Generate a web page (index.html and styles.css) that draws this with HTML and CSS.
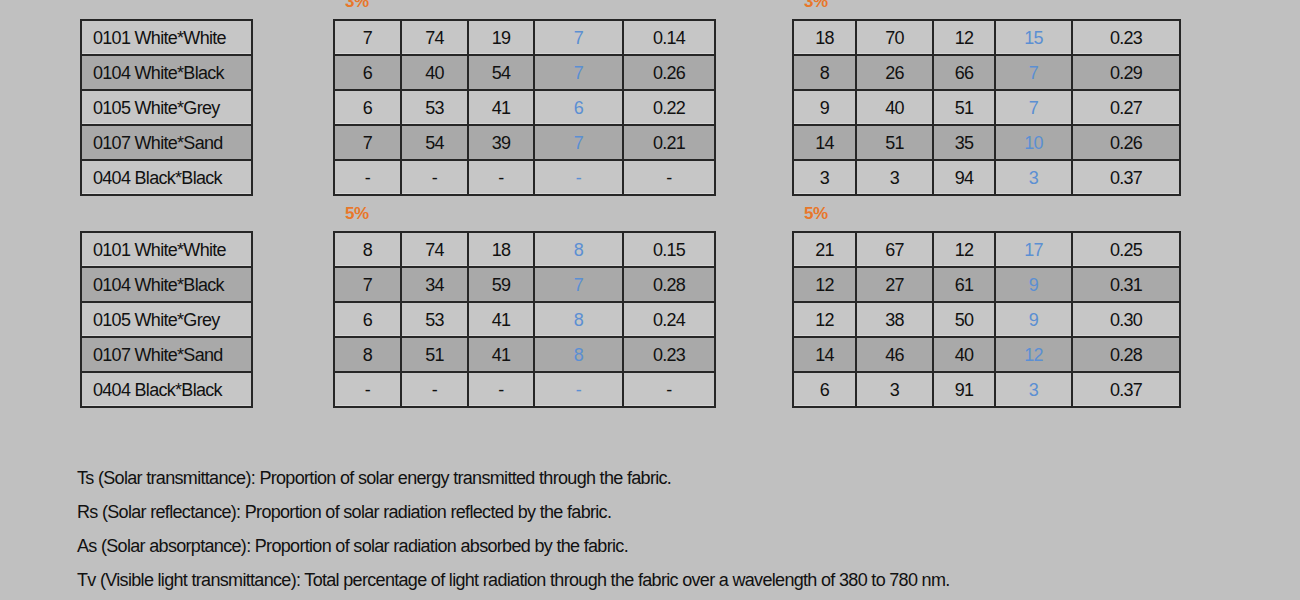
FILE: index.html
```html
<!DOCTYPE html>
<html>
<head>
<meta charset="utf-8">
<link rel="stylesheet" href="styles.css">
</head>
<body>
<div class="page">
  <div class="block">
    <div class="group names-group">
      <div class="label"></div>
      <table class="tbl names">
        <tr><td>0101 White*White</td></tr>
        <tr class="dark"><td>0104 White*Black</td></tr>
        <tr><td>0105 White*Grey</td></tr>
        <tr class="dark"><td>0107 White*Sand</td></tr>
        <tr><td>0404 Black*Black</td></tr>
      </table>
    </div>
    <div class="group mid-group">
      <div class="label">3%</div>
      <table class="tbl mid">
        <tr><td>7</td><td>74</td><td>19</td><td class="tv">7</td><td>0.14</td></tr>
        <tr class="dark"><td>6</td><td>40</td><td>54</td><td class="tv">7</td><td>0.26</td></tr>
        <tr><td>6</td><td>53</td><td>41</td><td class="tv">6</td><td>0.22</td></tr>
        <tr class="dark"><td>7</td><td>54</td><td>39</td><td class="tv">7</td><td>0.21</td></tr>
        <tr><td>-</td><td>-</td><td>-</td><td class="tv">-</td><td>-</td></tr>
      </table>
    </div>
    <div class="group right-group">
      <div class="label">3%</div>
      <table class="tbl right">
        <tr><td>18</td><td>70</td><td>12</td><td class="tv">15</td><td>0.23</td></tr>
        <tr class="dark"><td>8</td><td>26</td><td>66</td><td class="tv">7</td><td>0.29</td></tr>
        <tr><td>9</td><td>40</td><td>51</td><td class="tv">7</td><td>0.27</td></tr>
        <tr class="dark"><td>14</td><td>51</td><td>35</td><td class="tv">10</td><td>0.26</td></tr>
        <tr><td>3</td><td>3</td><td>94</td><td class="tv">3</td><td>0.37</td></tr>
      </table>
    </div>
  </div>
  <div class="block">
    <div class="group names-group">
      <div class="label"></div>
      <table class="tbl names">
        <tr><td>0101 White*White</td></tr>
        <tr class="dark"><td>0104 White*Black</td></tr>
        <tr><td>0105 White*Grey</td></tr>
        <tr class="dark"><td>0107 White*Sand</td></tr>
        <tr><td>0404 Black*Black</td></tr>
      </table>
    </div>
    <div class="group mid-group">
      <div class="label">5%</div>
      <table class="tbl mid">
        <tr><td>8</td><td>74</td><td>18</td><td class="tv">8</td><td>0.15</td></tr>
        <tr class="dark"><td>7</td><td>34</td><td>59</td><td class="tv">7</td><td>0.28</td></tr>
        <tr><td>6</td><td>53</td><td>41</td><td class="tv">8</td><td>0.24</td></tr>
        <tr class="dark"><td>8</td><td>51</td><td>41</td><td class="tv">8</td><td>0.23</td></tr>
        <tr><td>-</td><td>-</td><td>-</td><td class="tv">-</td><td>-</td></tr>
      </table>
    </div>
    <div class="group right-group">
      <div class="label">5%</div>
      <table class="tbl right">
        <tr><td>21</td><td>67</td><td>12</td><td class="tv">17</td><td>0.25</td></tr>
        <tr class="dark"><td>12</td><td>27</td><td>61</td><td class="tv">9</td><td>0.31</td></tr>
        <tr><td>12</td><td>38</td><td>50</td><td class="tv">9</td><td>0.30</td></tr>
        <tr class="dark"><td>14</td><td>46</td><td>40</td><td class="tv">12</td><td>0.28</td></tr>
        <tr><td>6</td><td>3</td><td>91</td><td class="tv">3</td><td>0.37</td></tr>
      </table>
    </div>
  </div>
  <div class="notes">
    <p>Ts (Solar transmittance): Proportion of solar energy transmitted through the fabric.</p>
    <p>Rs (Solar reflectance): Proportion of solar radiation reflected by the fabric.</p>
    <p>As (Solar absorptance): Proportion of solar radiation absorbed by the fabric.</p>
    <p>Tv (Visible light transmittance): Total percentage of light radiation through the fabric over a wavelength of 380 to 780 nm.</p>
  </div>
</div>
</body>
</html>
```
FILE: styles.css
```css
html, body {
  margin: 0;
  padding: 0;
  background: #c0c0c0;
}
body {
  font-family: "Liberation Sans", Arial, sans-serif;
  color: #111111;
  height: 600px;
  overflow: hidden;
}
.page {
  margin-top: -8px;
  padding-left: 80px;
}
.block {
  display: flex;
  align-items: flex-start;
  margin-bottom: 8px;
}
.names-group { width: 253px; }
.mid-group { width: 459px; }
.right-group { width: 390px; }
.label {
  height: 20px;
  line-height: 20px;
  margin-bottom: 7px;
  padding-left: 12px;
  color: #e8772a;
  font-size: 17px;
  letter-spacing: -0.5px;
  font-weight: bold;
}
.tbl {
  border-collapse: collapse;
  table-layout: fixed;
}
.tbl td {
  border: 2px solid #262626;
  height: 32px;
  padding: 1px 0 0;
  font-size: 18px;
  letter-spacing: -0.7px;
  line-height: 32px;
  white-space: nowrap;
  text-align: center;
  background: #c6c6c6;
  box-shadow: inset 0 -1px 0 #d4d4d4;
}
.tbl tr.dark td {
  background: #a9a9a9;
  box-shadow: none;
}
.names { width: 173px; }
.names td {
  text-align: left;
  padding-left: 11px;
}
.mid { width: 383px; }
.mid td:nth-child(1) { width: 65px; }
.mid td:nth-child(2) { width: 65px; }
.mid td:nth-child(3) { width: 64px; }
.mid td:nth-child(4) { width: 87px; }
.right { width: 389px; }
.right td:nth-child(1) { width: 61px; }
.right td:nth-child(2) { width: 75px; }
.right td:nth-child(3) { width: 60px; }
.right td:nth-child(4) { width: 75px; }
.tbl td.tv { color: #5b8fd3; }
.notes {
  margin-top: 53px;
  margin-left: -3px;
}
.notes p {
  margin: 0;
  font-size: 18px;
  letter-spacing: -0.68px;
  line-height: 34px;
  color: #111111;
}
```
